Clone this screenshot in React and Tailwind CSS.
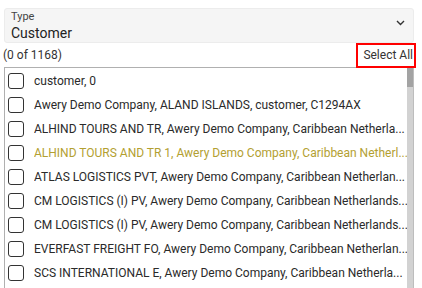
import React from 'react'

const rows = [
  { text: 'customer, 0' },
  { text: 'Awery Demo Company, ALAND ISLANDS, customer, C1294AX' },
  { text: 'ALHIND TOURS AND TR, Awery Demo Company, Caribbean Netherla...' },
  { text: 'ALHIND TOURS AND TR 1, Awery Demo Company, Caribbean Netherl...', active: true },
  { text: 'ATLAS LOGISTICS PVT, Awery Demo Company, Caribbean Netherlan...' },
  { text: 'CM LOGISTICS (I) PV, Awery Demo Company, Caribbean Netherlands...' },
  { text: 'CM LOGISTICS (I) PV, Awery Demo Company, Caribbean Netherlands...' },
  { text: 'EVERFAST FREIGHT FO, Awery Demo Company, Caribbean Netherlan...' },
  { text: 'SCS INTERNATIONAL E, Awery Demo Company, Caribbean Netherla...' },
]

const App = () => {
  return (
    <div className="w-[422px] h-[288px] overflow-hidden bg-white font-['Roboto',sans-serif] text-[#212121]">
      <div className="ml-[4px] w-[410px] pt-[8px]">
        {/* select */}
        <div className="h-[35px] bg-[#f5f5f5] border border-[#ececec] rounded-[3px] flex items-center pl-[6px] pr-[7px]">
          <div className="flex-1 flex flex-col leading-none">
            <span className="text-[11px] text-[#444] leading-[12px]">Type</span>
            <span className="text-[14px] text-[#222] leading-[16px] mt-[2px]">Customer</span>
          </div>
          <svg width="9" height="6" viewBox="0 0 9 6" className="mb-[6px] mr-[1px]">
            <path d="M1 1l3.5 3.5L8 1" fill="none" stroke="#333" strokeWidth="1.4" />
          </svg>
        </div>

        {/* count + select all */}
        <div className="h-[24px] flex items-center justify-between">
          <span className="text-[12px] text-[#333] -ml-[1px]">(0 of 1168)</span>
          <button className="h-[25px] -mr-[2px] pl-[5px] pr-[1px] border-2 border-[#ff0000] text-[12px] text-[#333] leading-none">
            Select All
          </button>
        </div>

        {/* list */}
        <div className="flex border-t border-l border-[#b0b0b0] h-[230px]">
          <div className="flex-1 min-w-0 flex flex-col pt-[1px]">
            {rows.map((r, i) => (
              <div key={i} className="h-[24px] shrink-0 flex items-center pl-[3px]">
                <span className="w-[16px] h-[16px] shrink-0 border-[1.5px] border-[#333] rounded-[3px]" />
                <span
                  className={
                    'ml-[10px] whitespace-nowrap overflow-hidden text-[12px] ' +
                    (r.active ? 'text-[#b3a031]' : 'text-[#2a2a2a]')
                  }
                >
                  {r.text}
                </span>
              </div>
            ))}
          </div>
          <div className="w-[7px] shrink-0 bg-[#d2d2d2] border-r border-[#bdbdbd] flex flex-col">
            <div className="h-[19px] bg-[#a3a3a3]" />
          </div>
        </div>
      </div>
    </div>
  )
}

export default App
